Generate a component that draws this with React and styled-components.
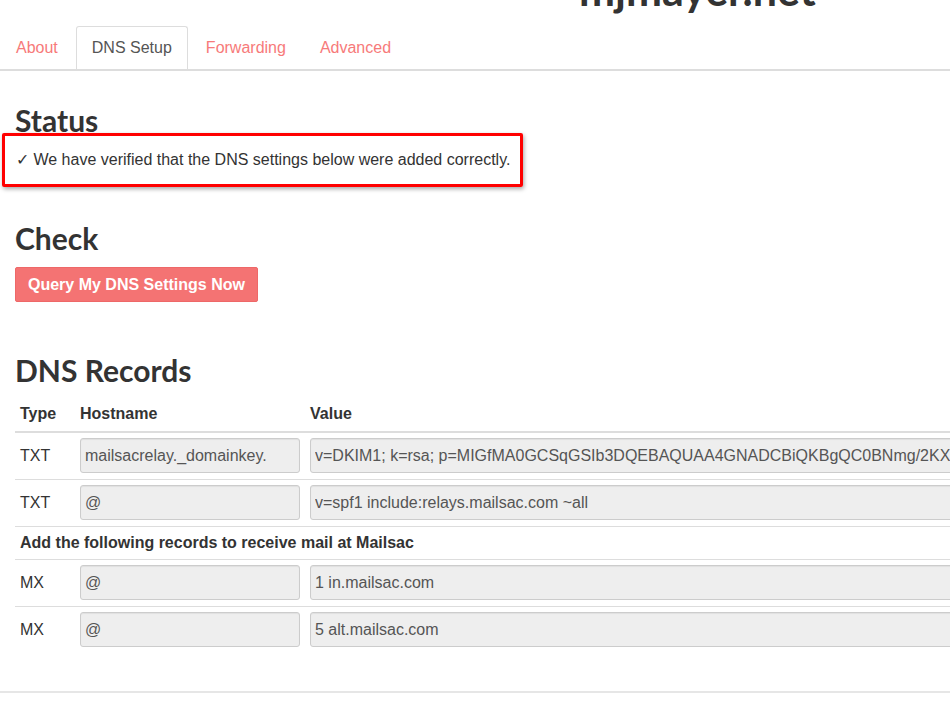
import React from 'react';
import styled, { createGlobalStyle } from 'styled-components';

const GlobalStyle = createGlobalStyle`
  html, body {
    margin: 0;
    padding: 0;
    overflow: hidden;
    background: #fff;
  }
  body {
    font-family: "Liberation Sans", Arial, sans-serif;
    font-size: 16px;
    color: #333;
  }
`;

const Page = styled.div`
  width: 950px;
  overflow: hidden;
`;

const SiteTitle = styled.h1`
  margin: -31px 0 0 0;
  padding-left: 579px;
  font-family: Lato, "Open Sans", sans-serif;
  font-weight: 700;
  font-size: 43px;
  line-height: 42px;
  color: #333;
  white-space: nowrap;
`;

const Tabs = styled.ul`
  display: flex;
  list-style: none;
  margin: 15px 0 0 0;
  padding: 0;
  border-bottom: 2px solid #ddd;
`;

const Tab = styled.li`
  margin-right: 2px;
  padding: 10px 15px;
  line-height: 22px;
  border: 1px solid ${p => (p.$active ? '#ddd' : 'transparent')};
  border-bottom: none;
  border-radius: 3px 3px 0 0;
  color: ${p => (p.$active ? '#555' : '#f77a7a')};
  cursor: pointer;
`;

const Content = styled.div`
  padding: 0 15px;
`;

const Heading = styled.h2`
  margin: ${p => p.$top}px 0 0 0;
  font-family: Lato, "Open Sans", sans-serif;
  font-weight: 700;
  font-size: 30px;
  line-height: 33px;
  color: #333;
`;

const StatusBox = styled.div`
  box-sizing: border-box;
  width: 521px;
  margin: -4px 0 0 -13px;
  padding: 13px 6px 13px 11px;
  border: 3px solid #ff0000;
  border-radius: 2px;
  box-shadow: 1px 2px 4px rgba(0, 0, 0, 0.35);
  line-height: 22px;
  color: #333;
  white-space: nowrap;
`;

const Button = styled.button`
  display: block;
  margin-top: 12px;
  height: 35px;
  padding: 6px 12px;
  font-family: "Liberation Sans", Arial, sans-serif;
  font-size: 16px;
  font-weight: 700;
  line-height: 21px;
  color: #fff;
  background: #f47373;
  border: 1px solid #ee6868;
  border-radius: 2px;
  cursor: pointer;
`;

const Table = styled.table`
  width: 1150px;
  margin-top: 10px;
  border-collapse: collapse;
`;

const Th = styled.th`
  text-align: left;
  padding: 6px 5px;
  line-height: 22px;
  font-weight: 700;
  border-bottom: 2px solid #ddd;
  width: ${p => p.$w || 'auto'};
`;

const Row = styled.tr`
  border-top: ${p => (p.$first ? 'none' : '1px solid #ddd')};
`;

const Td = styled.td`
  padding: 5px 5px 6px;
  line-height: 21px;
  vertical-align: middle;
  font-weight: ${p => (p.$bold ? 700 : 400)};
`;

const Field = styled.input`
  box-sizing: border-box;
  display: block;
  width: ${p => p.$w};
  height: 35px;
  padding: 6px 4px;
  font-family: "Liberation Sans", Arial, sans-serif;
  font-size: 16px;
  color: #555;
  background: #eee;
  border: 1px solid #ccc;
  border-radius: 3px;
  box-shadow: inset 0 1px 1px rgba(0, 0, 0, 0.06);
  outline: none;
`;

const Rule = styled.hr`
  margin: 38px 0 0 0;
  border: none;
  border-top: 2px solid #e6e6e6;
`;

const records = [
  { type: 'TXT', host: 'mailsacrelay._domainkey.', value: 'v=DKIM1; k=rsa; p=MIGfMA0GCSqGSIb3DQEBAQUAA4GNADCBiQKBgQC0BNmg/2KXr8wLr1bPxG' },
  { type: 'TXT', host: '@', value: 'v=spf1 include:relays.mailsac.com ~all' },
];

const mxRecords = [
  { type: 'MX', host: '@', value: '1 in.mailsac.com' },
  { type: 'MX', host: '@', value: '5 alt.mailsac.com' },
];

const RecordRow = ({ rec, first }) => (
  <Row $first={first}>
    <Td>{rec.type}</Td>
    <Td><Field $w="220px" readOnly value={rec.host} /></Td>
    <Td><Field $w="830px" readOnly value={rec.value} /></Td>
  </Row>
);

const App = () => {
  return (
    <Page>
      <GlobalStyle />
      <SiteTitle>mjmayer.net</SiteTitle>
      <Tabs>
        <Tab>About</Tab>
        <Tab $active>DNS Setup</Tab>
        <Tab>Forwarding</Tab>
        <Tab>Advanced</Tab>
      </Tabs>

      <Content>
        <Heading $top={33}>Status</Heading>
        <StatusBox>✓ We have verified that the DNS settings below were added correctly.</StatusBox>

        <Heading $top={35}>Check</Heading>
        <Button>Query My DNS Settings Now</Button>

        <Heading $top={52}>DNS Records</Heading>
        <Table>
          <thead>
            <tr>
              <Th $w="50px">Type</Th>
              <Th $w="220px">Hostname</Th>
              <Th>Value</Th>
            </tr>
          </thead>
          <tbody>
            {records.map((r, i) => (
              <RecordRow key={i} rec={r} first={i === 0} />
            ))}
            <Row>
              <Td $bold colSpan={3}>Add the following records to receive mail at Mailsac</Td>
            </Row>
            {mxRecords.map((r, i) => (
              <RecordRow key={'mx' + i} rec={r} />
            ))}
          </tbody>
        </Table>
      </Content>
      <Rule />
    </Page>
  );
};

export default App;
